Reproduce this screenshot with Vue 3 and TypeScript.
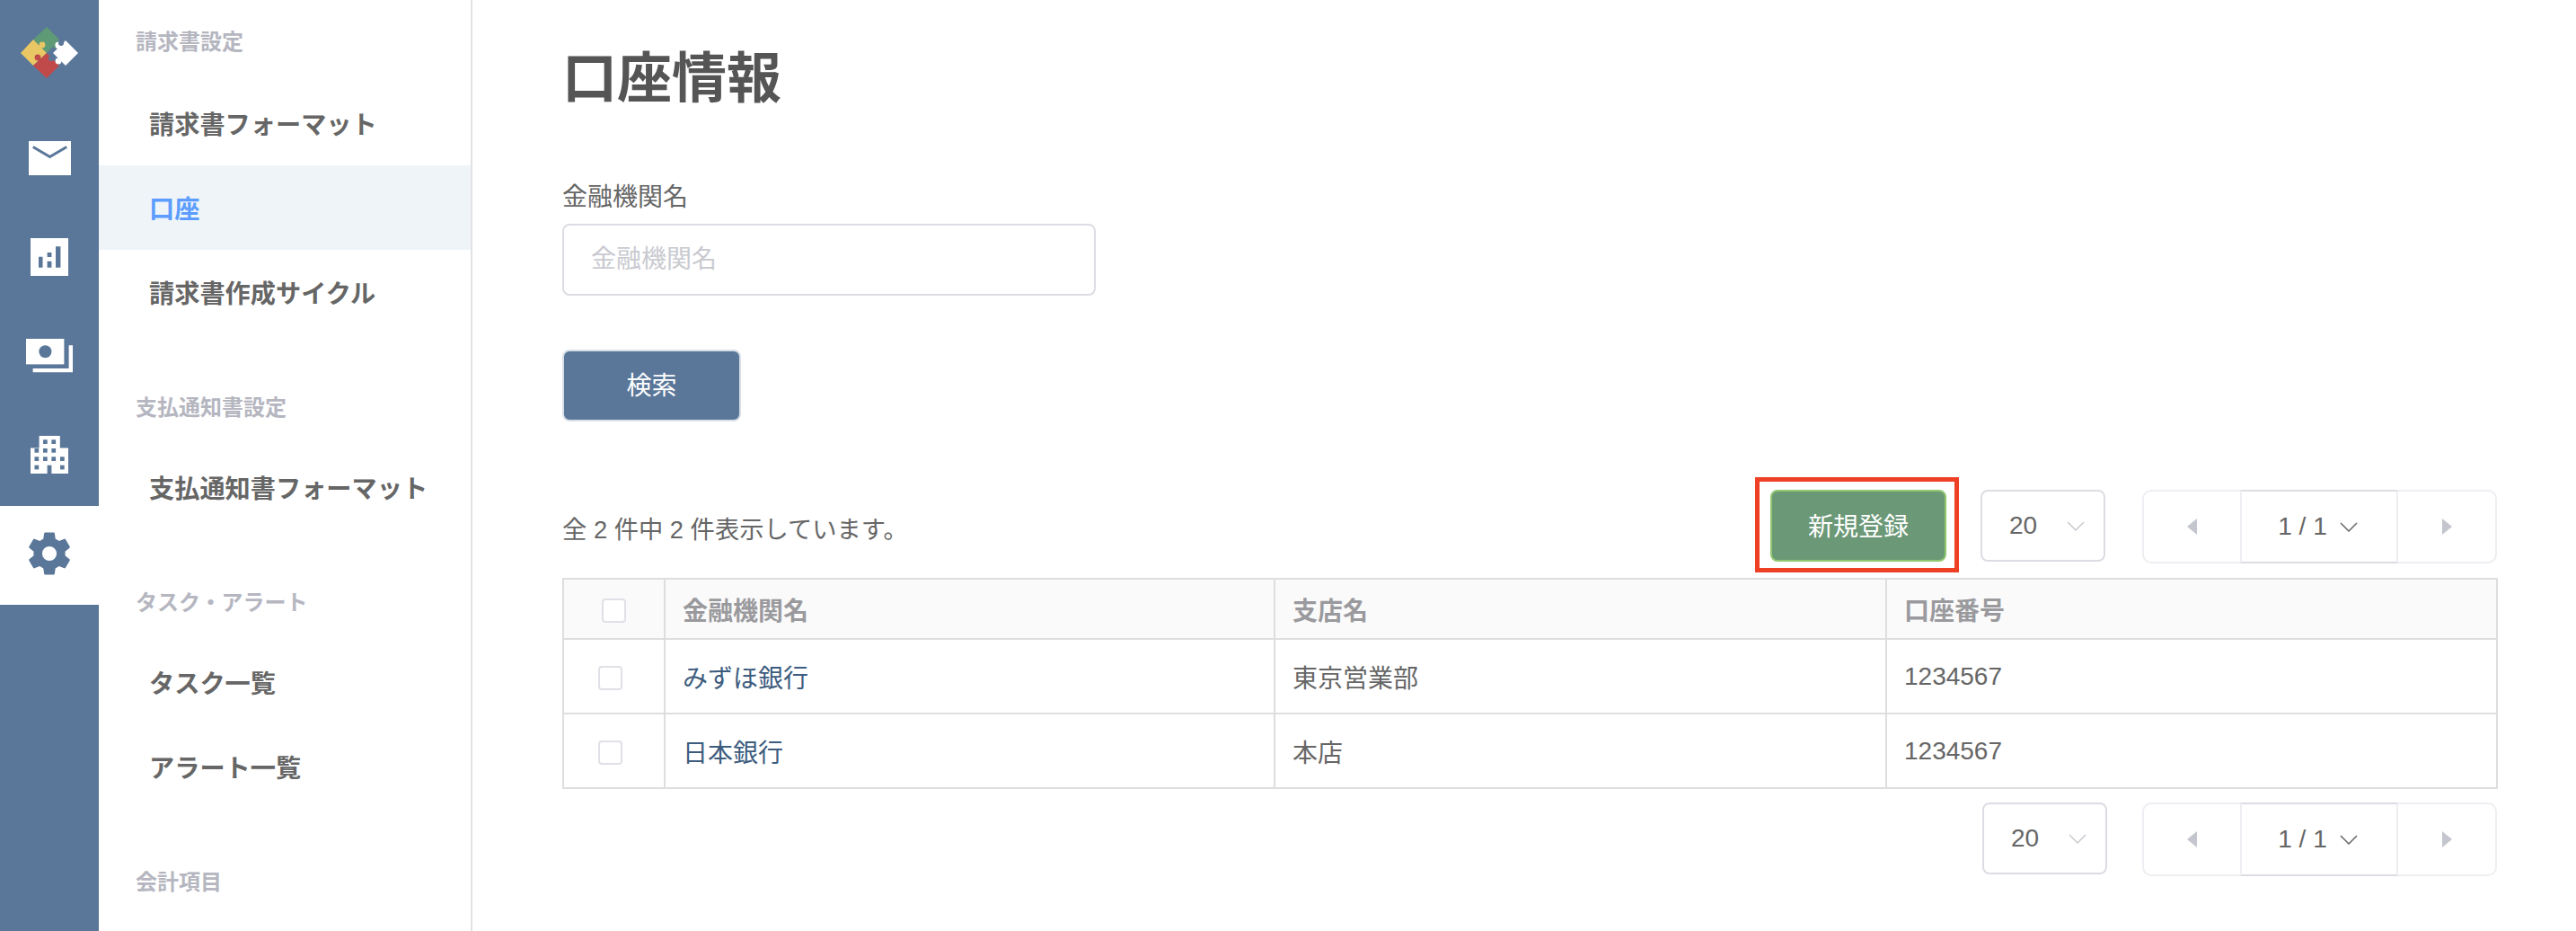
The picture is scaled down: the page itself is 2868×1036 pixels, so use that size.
<script setup lang="ts">
const sections = [
  { label: '請求書設定', items: [{ t: '請求書フォーマット' }, { t: '口座', active: true }, { t: '請求書作成サイクル' }] },
  { label: '支払通知書設定', items: [{ t: '支払通知書フォーマット' }] },
  { label: 'タスク・アラート', items: [{ t: 'タスク一覧' }, { t: 'アラート一覧' }] },
  { label: '会計項目', items: [] as { t: string; active?: boolean }[] },
]
const rows = [
  { bank: 'みずほ銀行', branch: '東京営業部', no: '1234567' },
  { bank: '日本銀行', branch: '本店', no: '1234567' },
]
const windows = [
  [14, 4.3], [23.4, 4.3],
  [4.5, 14], [14, 14], [23.4, 14],
  [4.5, 23.3], [14, 23.3], [23.4, 23.3], [33, 23.3],
  [4.5, 32.7], [33, 32.7],
]
</script>

<template>
  <div class="app">
    <nav class="rail">
      <div class="logo">
        <svg width="64" height="58" viewBox="0 0 64 58">
          <polygon points="29,0 43,14 29,29 14,14" fill="#5f9a76" />
          <circle cx="39" cy="20" r="3.4" fill="#5f9a76" />
          <polygon points="0,29 14,14 29,29 14,43" fill="#e9c764" />
          <circle cx="24" cy="20" r="3.4" fill="#e9c764" />
          <polygon points="29,57 14,43 29,29 43,43" fill="#c04a4a" />
          <circle cx="19" cy="34" r="3.4" fill="#c04a4a" />
          <polygon points="50,15 64,29 50,43 36,29" fill="#fff" />
          <circle cx="42" cy="20" r="3.6" fill="#fff" />
          <circle cx="45" cy="18" r="3" fill="#5a7799" />
          <circle cx="41" cy="22" r="2" fill="#fff" />
          <circle cx="34" cy="35" r="3" fill="#5a7799" />
          <circle cx="42" cy="38" r="3.4" fill="#fff" />
        </svg>
      </div>
      <a class="rail-item">
        <svg width="47" height="38" viewBox="0 0 47 38">
          <rect width="47" height="38" fill="#fff" />
          <path d="M4.8 6.5 L23.5 17.5 L42.2 6.5" fill="none" stroke="#5a7799" stroke-width="3" />
        </svg>
      </a>
      <a class="rail-item">
        <svg width="42" height="42" viewBox="0 0 42 42">
          <rect width="42" height="42" fill="#fff" />
          <path d="M9 20.7h4.5v12H9zM18.6 16h4.8v5h-4.8zM18.6 25.7h4.8v7h-4.8zM28 9.3h5.4v23.4H28z" fill="#5a7799" />
        </svg>
      </a>
      <a class="rail-item">
        <svg width="52" height="38" viewBox="0 0 52 38">
          <rect width="42.4" height="28.4" fill="#fff" />
          <circle cx="21.4" cy="14.3" r="7" fill="#5a7799" />
          <path d="M47.6 7.3H52v30H7.6V33h40z" fill="#fff" />
        </svg>
      </a>
      <a class="rail-item">
        <svg width="42" height="42" viewBox="0 0 42 42">
          <path d="M9.6 0h23.2v13.4H42V42H0V13.4h9.6z" fill="#fff" />
          <rect v-for="(w, i) in windows" :key="i" :x="w[0]" :y="w[1]" width="4.7" height="4.7" fill="#5a7799" />
          <rect x="18.6" y="32.7" width="4.8" height="9.3" fill="#5a7799" />
        </svg>
      </a>
      <a class="rail-item rail-active">
        <svg width="46" height="48" viewBox="2.6 2.4 18.8 19.2">
          <path fill-rule="evenodd" fill="#5a7799" d="M19.14,12.94c0.04-0.3,0.06-0.61,0.06-0.94c0-0.32-0.02-0.64-0.07-0.94l2.03-1.58c0.18-0.14,0.23-0.41,0.12-0.61l-1.92-3.32c-0.12-0.22-0.37-0.29-0.59-0.22l-2.39,0.96c-0.5-0.38-1.03-0.7-1.62-0.94L14.4,2.81c-0.04-0.24-0.24-0.41-0.48-0.41h-3.84c-0.24,0-0.43,0.17-0.47,0.41L9.25,5.35C8.66,5.59,8.12,5.92,7.63,6.29L5.24,5.33c-0.22-0.08-0.47,0-0.59,0.22L2.74,8.87C2.62,9.08,2.66,9.34,2.86,9.48l2.03,1.58C4.84,11.36,4.8,11.69,4.8,12s0.02,0.64,0.07,0.94l-2.03,1.58c-0.18,0.14-0.23,0.41-0.12,0.61l1.92,3.32c0.12,0.22,0.37,0.29,0.59,0.22l2.39-0.96c0.5,0.38,1.03,0.7,1.62,0.94l0.36,2.54c0.05,0.24,0.24,0.41,0.48,0.41h3.84c0.24,0,0.44-0.17,0.47-0.41l0.36-2.54c0.59-0.24,1.13-0.56,1.62-0.94l2.39,0.96c0.22,0.08,0.47,0,0.59-0.22l1.92-3.32c0.12-0.22,0.07-0.47-0.12-0.61L19.14,12.94zM12,15.3a3.3,3.3,0,1,1,0-6.6a3.3,3.3,0,0,1,0,6.6z" />
        </svg>
      </a>
    </nav>

    <aside class="side">
      <section v-for="s in sections" :key="s.label" class="side-section">
        <div class="side-label">{{ s.label }}</div>
        <div class="side-items">
          <a v-for="it in s.items" :key="it.t" class="side-item" :class="{ active: it.active }">{{ it.t }}</a>
        </div>
      </section>
    </aside>

    <main class="main">
      <h1 class="title">口座情報</h1>
      <label class="field-label">金融機関名</label>
      <input class="field-input" placeholder="金融機関名" />
      <button class="btn-search">検索</button>

      <div class="toolbar">
        <div class="count">全 2 件中 2 件表示しています。</div>
        <div class="marked"><button class="btn-new">新規登録</button></div>
        <div class="select">
          <span>20</span>
          <svg width="20" height="11" viewBox="0 0 20 11"><path d="M1 1l9 9 9-9" fill="none" stroke="#c9cad0" stroke-width="1.5" /></svg>
        </div>
        <div class="pager">
          <div class="pg-side"><svg width="11" height="18" viewBox="0 0 11 18"><path d="M11 0v18L0 9z" fill="#c4c6ce" /></svg></div>
          <div class="pg-mid">
            <span>1 / 1</span>
            <svg width="20" height="11" viewBox="0 0 20 11"><path d="M1 1l9 9 9-9" fill="none" stroke="#666" stroke-width="1.5" /></svg>
          </div>
          <div class="pg-side"><svg width="11" height="18" viewBox="0 0 11 18"><path d="M0 0v18l11-9z" fill="#c4c6ce" /></svg></div>
        </div>
      </div>

      <table class="table">
        <colgroup>
          <col class="c0" /><col class="c1" /><col class="c2" /><col class="c3" />
        </colgroup>
        <thead>
          <tr>
            <th class="cb-cell"><span class="cb head-cb"></span></th>
            <th>金融機関名</th>
            <th>支店名</th>
            <th>口座番号</th>
          </tr>
        </thead>
        <tbody>
          <tr v-for="r in rows" :key="r.bank">
            <td class="cb-cell"><span class="cb row-cb"></span></td>
            <td><a class="link">{{ r.bank }}</a></td>
            <td>{{ r.branch }}</td>
            <td>{{ r.no }}</td>
          </tr>
        </tbody>
      </table>

      <div class="toolbar bottom">
        <div class="select">
          <span>20</span>
          <svg width="20" height="11" viewBox="0 0 20 11"><path d="M1 1l9 9 9-9" fill="none" stroke="#c9cad0" stroke-width="1.5" /></svg>
        </div>
        <div class="pager">
          <div class="pg-side"><svg width="11" height="18" viewBox="0 0 11 18"><path d="M11 0v18L0 9z" fill="#c4c6ce" /></svg></div>
          <div class="pg-mid">
            <span>1 / 1</span>
            <svg width="20" height="11" viewBox="0 0 20 11"><path d="M1 1l9 9 9-9" fill="none" stroke="#666" stroke-width="1.5" /></svg>
          </div>
          <div class="pg-side"><svg width="11" height="18" viewBox="0 0 11 18"><path d="M0 0v18l11-9z" fill="#c4c6ce" /></svg></div>
        </div>
      </div>
    </main>
  </div>
</template>

<style>
html, body { margin: 0; background: #fff; overflow: hidden; }
</style>

<style scoped>
.app {
  display: flex;
  width: 2868px;
  height: 1036px;
  overflow: hidden;
  background: #fff;
  font-family: "Liberation Sans", "Noto Sans CJK JP", sans-serif;
  font-size: 28px;
  color: #666;
}
.rail {
  flex: none;
  width: 110px;
  background: #5a7799;
  display: flex;
  flex-direction: column;
}
.logo {
  height: 123px;
  box-sizing: border-box;
  padding: 30px 0 0 23px;
}
.logo svg { display: block; }
.rail-item {
  height: 110px;
  box-sizing: border-box;
  padding-bottom: 5px;
  display: flex;
  align-items: center;
  justify-content: center;
}
.rail-active { background: #fff; }

.side {
  flex: none;
  width: 416px;
  box-sizing: border-box;
  border-right: 2px solid #e2e2e4;
  padding-top: 30px;
}
.side-section + .side-section { margin-top: 65px; }
.side-label {
  padding-left: 41px;
  font-size: 24px;
  line-height: 34px;
  font-weight: 700;
  color: #b5b6c0;
  margin-bottom: 26px;
}
.side-section + .side-section .side-label { margin-bottom: 24px; }
.side-item {
  display: flex;
  align-items: center;
  height: 94px;
  box-sizing: border-box;
  padding: 0 0 2px 56px;
  font-size: 28.2px;
  font-weight: 700;
  color: #666;
}
.side-item.active {
  background: #eff4f9;
  color: #5c9dff;
}

.main {
  flex: 1;
  min-width: 0;
  box-sizing: border-box;
  padding: 46px 88px 0 100px;
  display: flex;
  flex-direction: column;
  align-items: flex-start;
}
.title {
  margin: 0;
  font-size: 61px;
  line-height: 84px;
  font-weight: 700;
  color: #555;
}
.field-label {
  margin-top: 70px;
  line-height: 40px;
  color: #666;
}
.field-input {
  margin-top: 9px;
  width: 594px;
  height: 80px;
  box-sizing: border-box;
  border: 2px solid #dcdde3;
  border-radius: 8px;
  padding: 0 30px;
  font: inherit;
  color: #666;
  outline: none;
}
.field-input::placeholder { color: #c9cad0; opacity: 1; }
.btn-search {
  margin-top: 60px;
  width: 199px;
  height: 80px;
  box-sizing: border-box;
  background: #5a7799;
  border: 2px solid #d8dfe8;
  border-radius: 8px;
  color: #fff;
  font: inherit;
  padding: 0 0 4px;
}

.toolbar {
  align-self: stretch;
  margin-top: 76px;
  height: 82px;
  display: flex;
  align-items: flex-start;
  justify-content: flex-end;
}
.toolbar.bottom { margin-top: 15px; }
.count {
  margin-right: auto;
  align-self: center;
  padding-top: 2px;
  font-size: 27.3px;
  color: #666;
}
.marked { position: relative; height: 80px; }
.marked::after {
  content: "";
  position: absolute;
  left: -17px;
  top: -14px;
  width: 227px;
  height: 106px;
  box-sizing: border-box;
  border: 5px solid #ee4025;
  pointer-events: none;
}
.btn-new {
  display: block;
  width: 196px;
  height: 80px;
  box-sizing: border-box;
  background: #6b9877;
  border: 2px solid #90c76f;
  border-radius: 8px;
  color: #fff;
  font: inherit;
  padding: 0 0 2px;
}
.select {
  margin-left: 38px;
  width: 139px;
  height: 80px;
  box-sizing: border-box;
  border: 2px solid #dcdde3;
  border-radius: 8px;
  display: flex;
  align-items: center;
  padding-left: 30px;
  color: #666;
}
.select svg { margin-left: 33px; }
.toolbar.bottom .select { margin-left: 0; }
.pager {
  margin-left: 41px;
  width: 395px;
  height: 82px;
  box-sizing: border-box;
  display: flex;
  border: 2px solid #eeeef3;
  border-radius: 10px;
}
.toolbar.bottom .pager { margin-left: 39px; }
.pg-side {
  flex: 1;
  display: flex;
  align-items: center;
  justify-content: center;
}
.pg-side:first-child { flex: none; width: 107px; }
.pg-mid {
  flex: none;
  width: 176px;
  box-sizing: border-box;
  margin: -2px 0;
  border: 2px solid #eeeef3;
  border-top-color: #dcdde3;
  border-bottom-color: #dcdde3;
  display: flex;
  align-items: center;
  justify-content: center;
  gap: 14px;
  padding-right: 3px;
  color: #666;
}

.table {
  margin-top: 16px;
  width: 2153px;
  table-layout: fixed;
  border-collapse: collapse;
}
.c0 { width: 113px; }
.c1 { width: 679px; }
.c2 { width: 681px; }
.c3 { width: 680px; }
.table th, .table td {
  border: 2px solid #dedee0;
  padding: 0 0 0 19px;
  text-align: left;
}
.table th {
  height: 65px;
  background: #fafafa;
  font-weight: 700;
  color: #9a9a9e;
}
.table td {
  height: 80px;
  padding-top: 1px;
  color: #666;
}
.table .cb-cell { padding: 0; text-align: center; }
.cb {
  display: block;
  position: relative;
  top: 2px;
  width: 27px;
  height: 27px;
  box-sizing: border-box;
  border: 2px solid #e0e1e7;
  border-radius: 4px;
  background: #fff;
  margin: 0 auto;
}
.row-cb { left: -4px; }
.link { color: #3d5c7e; }
</style>
